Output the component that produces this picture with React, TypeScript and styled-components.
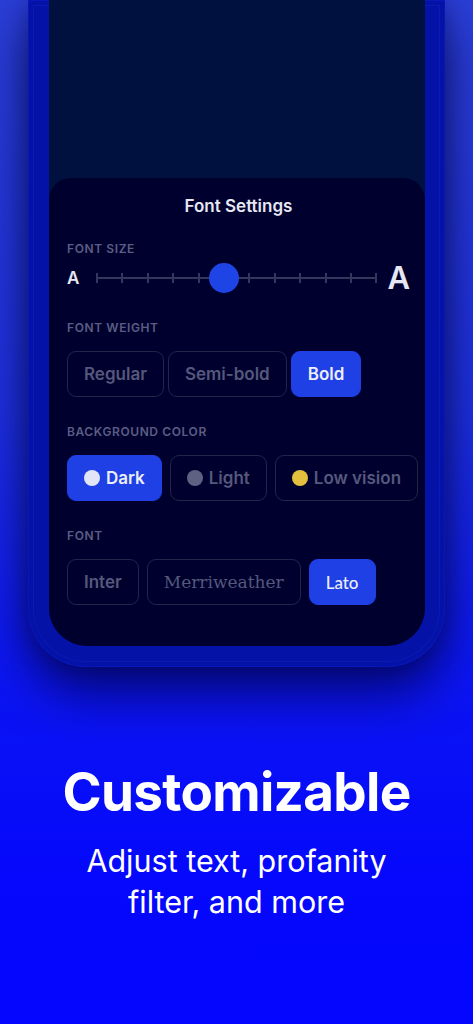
import React from "react";
import styled, { createGlobalStyle } from "styled-components";

const GlobalStyle = createGlobalStyle`
  html, body {
    margin: 0;
    padding: 0;
  }
  body {
    width: 473px;
    height: 1024px;
    overflow: hidden;
    font-family: Inter, "Noto Sans", sans-serif;
    background: #0a10f5;
  }
`;

const Page = styled.div`
  width: 473px;
  height: 1024px;
  display: flex;
  flex-direction: column;
  background: linear-gradient(180deg, #2b3fd8 0%, #1e30e0 40%, #0c16f2 65%, #0508fb 85%, #0406ff 100%);
  overflow: hidden;
`;

const PhoneFrame = styled.div`
  margin-left: 28px;
  width: 417px;
  height: 667px;
  box-sizing: border-box;
  padding: 0 20px 21px 21px;
  background: #0412a8;
  border-radius: 0 0 58px 58px;
  box-shadow: inset 0 0 0 1px #0818b8, inset 0 0 0 5px #0412a8, inset 0 0 0 6px #0a1ab4,
    0 26px 50px rgba(0, 0, 40, 0.62), 0 0 24px rgba(0, 0, 60, 0.35);
  display: flex;
`;

const Screen = styled.div`
  flex: 1;
  background: #00103f;
  border-radius: 0 0 38px 38px;
  overflow: hidden;
  display: flex;
  flex-direction: column;
  justify-content: flex-end;
`;

const Sheet = styled.div`
  height: 468px;
  box-sizing: border-box;
  background: #00002f;
  border-radius: 22px 22px 0 0;
  padding: 17px 15px 0 18px;
  display: flex;
  flex-direction: column;
`;

const SheetTitle = styled.div`
  text-align: center;
  font-size: 17px;
  line-height: 22px;
  font-weight: 600;
  color: #e6e7f2;
  margin-bottom: 24px;
`;

const Label = styled.div`
  font-size: 12px;
  line-height: 16px;
  font-weight: 600;
  letter-spacing: 0.6px;
  color: #5b5e82;
  text-transform: uppercase;
`;

const Section = styled.div<{ $gap: number; $after?: number }>`
  display: flex;
  flex-direction: column;
  gap: ${(p) => p.$gap}px;
  margin-bottom: ${(p) => p.$after ?? 27}px;
`;

const SliderRow = styled.div`
  display: flex;
  align-items: center;
  height: 32px;
`;

const SmallA = styled.span`
  font-size: 17px;
  font-weight: 600;
  color: #e6e7f2;
  width: 12px;
`;

const BigA = styled.span`
  font-size: 31px;
  font-weight: 600;
  color: #e6e7f2;
  line-height: 32px;
`;

const Track = styled.div`
  position: relative;
  flex: 1;
  margin: 0 10px 0 17px;
  height: 10px;
  display: flex;
  justify-content: space-between;
  align-items: center;
  &::before {
    content: "";
    position: absolute;
    left: 0;
    right: 0;
    top: 4px;
    height: 2px;
    background: #34375c;
  }
`;

const Tick = styled.span`
  width: 2px;
  height: 10px;
  background: #34375c;
`;

const Thumb = styled.span`
  position: absolute;
  top: 50%;
  width: 30px;
  height: 30px;
  border-radius: 50%;
  background: #1f44e6;
  transform: translate(-50%, -50%);
`;

const ButtonRow = styled.div<{ $gap: number }>`
  display: flex;
  gap: ${(p) => p.$gap}px;
`;

const Chip = styled.button<{ $active?: boolean; $font?: string; $weight?: number }>`
  height: 46px;
  box-sizing: border-box;
  padding: 0 16px;
  border-radius: 9px;
  border: 1px solid ${(p) => (p.$active ? "#1e40e4" : "#222548")};
  background: ${(p) => (p.$active ? "#1e40e4" : "transparent")};
  color: ${(p) => (p.$active ? "#eceefc" : "#55587b")};
  font-family: ${(p) => p.$font || 'Inter, "Noto Sans", sans-serif'};
  font-size: 17px;
  font-weight: ${(p) => p.$weight ?? 600};
  display: flex;
  align-items: center;
  gap: 6px;
  white-space: nowrap;
`;

const Swatch = styled.span<{ $color: string }>`
  width: 16px;
  height: 16px;
  border-radius: 50%;
  background: ${(p) => p.$color};
`;

const Copy = styled.div`
  margin-top: 93px;
  display: flex;
  flex-direction: column;
  align-items: center;
  color: #ffffff;
  text-align: center;
`;

const Headline = styled.h1`
  margin: 0;
  font-size: 53px;
  line-height: 64px;
  font-weight: 700;
  letter-spacing: -0.7px;
`;

const Subline = styled.p`
  margin: 16px 0 0;
  font-size: 30.5px;
  line-height: 41px;
  font-weight: 400;
  width: 340px;
`;

const TICKS = 12;
const SIZE_INDEX = 5;

export default function App() {
  return (
    <Page>
      <GlobalStyle />
      <PhoneFrame>
        <Screen>
          <Sheet>
            <SheetTitle>Font Settings</SheetTitle>

            <Section $gap={5} $after={26}>
              <Label>Font size</Label>
              <SliderRow>
                <SmallA>A</SmallA>
                <Track>
                  {Array.from({ length: TICKS }).map((_, i) => (
                    <Tick key={i} />
                  ))}
                  <Thumb style={{ left: `${(SIZE_INDEX / (TICKS - 1)) * 100}%` }} />
                </Track>
                <BigA>A</BigA>
              </SliderRow>
            </Section>

            <Section $gap={15}>
              <Label>Font weight</Label>
              <ButtonRow $gap={4}>
                <Chip>Regular</Chip>
                <Chip>Semi-bold</Chip>
                <Chip $active>Bold</Chip>
              </ButtonRow>
            </Section>

            <Section $gap={15}>
              <Label>Background color</Label>
              <ButtonRow $gap={8}>
                <Chip $active>
                  <Swatch $color="#e2e5f6" />
                  Dark
                </Chip>
                <Chip>
                  <Swatch $color="#5d6283" />
                  Light
                </Chip>
                <Chip>
                  <Swatch $color="#e4c03e" />
                  Low vision
                </Chip>
              </ButtonRow>
            </Section>

            <Section $gap={15}>
              <Label>Font</Label>
              <ButtonRow $gap={8}>
                <Chip>Inter</Chip>
                <Chip $font='"DejaVu Serif", "Liberation Serif", serif' $weight={400}>
                  Merriweather
                </Chip>
                <Chip $active $font='Lato, "Noto Sans", sans-serif' $weight={500}>
                  Lato
                </Chip>
              </ButtonRow>
            </Section>
          </Sheet>
        </Screen>
      </PhoneFrame>

      <Copy>
        <Headline>Customizable</Headline>
        <Subline>Adjust text, profanity filter, and more</Subline>
      </Copy>
    </Page>
  );
}
